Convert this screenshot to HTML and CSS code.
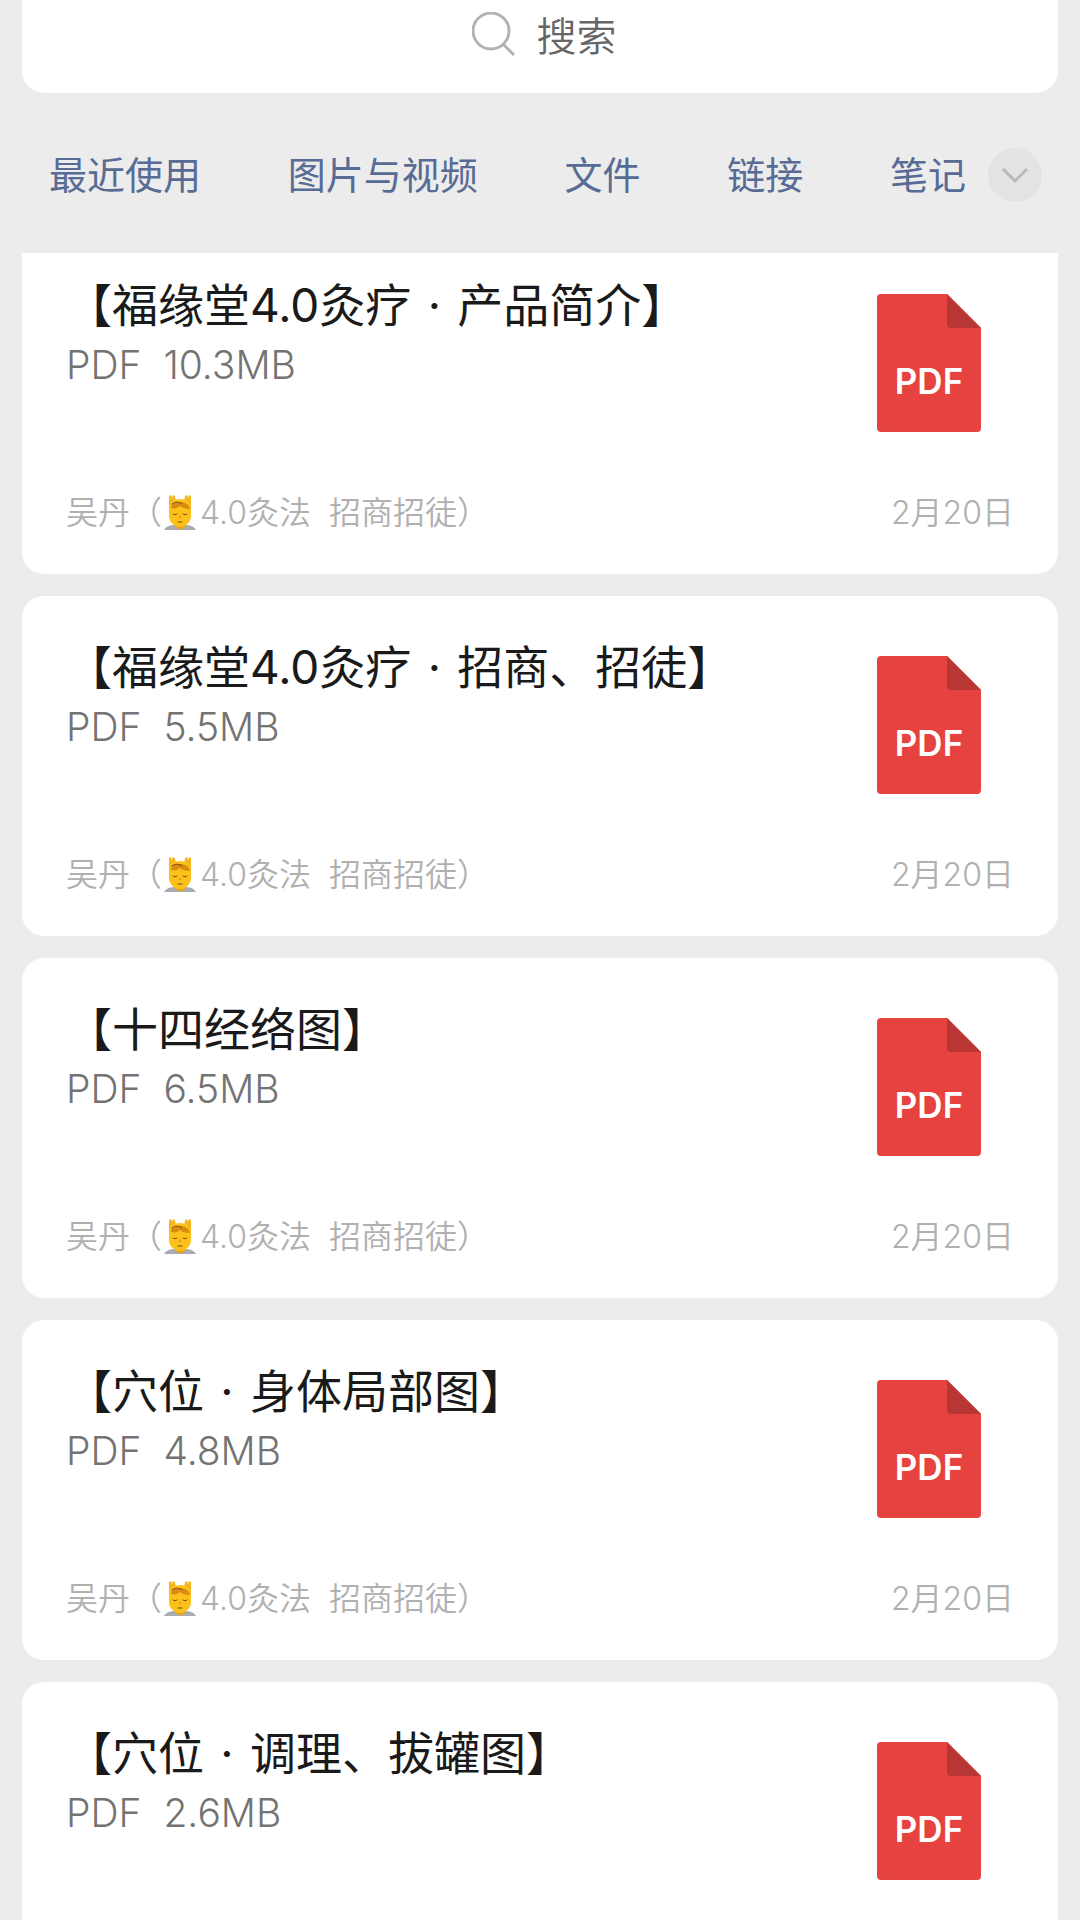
FILE: index.html
```
<!DOCTYPE html>
<html lang="zh-CN">
<head>
<meta charset="utf-8">
<meta name="viewport" content="width=device-width, initial-scale=1">
<title>搜索</title>
<link rel="stylesheet" href="styles.css">
</head>
<body>
<svg class="sprite" aria-hidden="true">
  <symbol id="pdf" viewBox="0 0 104 138">
    <path fill="#e64340" d="M4 0H70L104 34V134a4 4 0 0 1-4 4H4a4 4 0 0 1-4-4V4a4 4 0 0 1 4-4z"/>
    <path fill="#b83633" d="M70 0L104 34H74a4 4 0 0 1-4-4z"/>
  </symbol>
  <symbol id="massage" viewBox="0 0 32 36">
    <path fill="#a9abb3" d="M0 35C2 31 7 30 11 30h10c4 0 9 1 11 5z"/>
    <path fill="#e8a417" d="M12 27h9v5c-2 3-7 3-9 0z"/>
    <path fill="#f4b51e" d="M5 1l2-1 1 3 1-3 2 1 1 7-3 6-4 2zM27 1l-2-1-1 3-1-3-2 1-1 7 3 6 4 2z"/>
    <path fill="#fcc21b" d="M5 15C5 7 10 4 16 4s11 3 11 11v6c0 6-5 11-11 11S5 27 5 21z"/>
    <path fill="#d98b12" d="M7 13C7 9 11 7 16 7s9 2 10 7c-5 0-8-1-10-3-2 2-5 3-9 2z"/>
    <path fill="none" stroke="#744b12" stroke-width="1" stroke-linecap="round" d="M8 9c3-3 8-2 10 0M9 19c1 1 3 1 4 0M19 19c1 1 3 1 4 0M14 27h4"/>
    <path fill="none" stroke="#dc7d20" stroke-width="1" stroke-linecap="round" d="M16 21v2"/>
  </symbol>
</svg>

<header class="top">
  <label class="search">
    <svg class="search-icon" viewBox="0 0 44 44" aria-hidden="true"><circle cx="19" cy="19" r="18"/><path d="M31 32l11 11"/></svg>
    <input class="search-input" type="text" placeholder="搜索" aria-label="搜索">
  </label>
  <nav class="filters">
    <div class="tabs">
      <a class="tab" href="#">最近使用</a>
      <a class="tab" href="#">图片与视频</a>
      <a class="tab" href="#">文件</a>
      <a class="tab" href="#">链接</a>
      <a class="tab" href="#">笔记</a>
    </div>
    <button class="more" type="button" aria-label="更多">
      <svg class="chevron" viewBox="0 0 28 16" aria-hidden="true"><path d="M2 2l12 12L26 2"/></svg>
    </button>
  </nav>
</header>

<main class="list">
  <article class="card card-cut">
    <div class="body">
      <div class="text">
        <h2 class="title">【福缘堂4.0灸疗<span class="dot">·</span>产品简介】</h2>
        <p class="meta">PDF&nbsp; 10.3MB</p>
      </div>
      <div class="file"><svg class="sheet" aria-hidden="true"><use href="#pdf"/></svg><span class="kind">PDF</span></div>
    </div>
    <footer class="foot"><span class="source">吴丹（<svg class="emoji" aria-hidden="true"><use href="#massage"/></svg>4.0灸法&nbsp; 招商招徒）</span><time>2月20日</time></footer>
  </article>
  <article class="card">
    <div class="body">
      <div class="text">
        <h2 class="title">【福缘堂4.0灸疗<span class="dot">·</span>招商、招徒】</h2>
        <p class="meta">PDF&nbsp; 5.5MB</p>
      </div>
      <div class="file"><svg class="sheet" aria-hidden="true"><use href="#pdf"/></svg><span class="kind">PDF</span></div>
    </div>
    <footer class="foot"><span class="source">吴丹（<svg class="emoji" aria-hidden="true"><use href="#massage"/></svg>4.0灸法&nbsp; 招商招徒）</span><time>2月20日</time></footer>
  </article>
  <article class="card">
    <div class="body">
      <div class="text">
        <h2 class="title">【十四经络图】</h2>
        <p class="meta">PDF&nbsp; 6.5MB</p>
      </div>
      <div class="file"><svg class="sheet" aria-hidden="true"><use href="#pdf"/></svg><span class="kind">PDF</span></div>
    </div>
    <footer class="foot"><span class="source">吴丹（<svg class="emoji" aria-hidden="true"><use href="#massage"/></svg>4.0灸法&nbsp; 招商招徒）</span><time>2月20日</time></footer>
  </article>
  <article class="card">
    <div class="body">
      <div class="text">
        <h2 class="title">【穴位<span class="dot">·</span>身体局部图】</h2>
        <p class="meta">PDF&nbsp; 4.8MB</p>
      </div>
      <div class="file"><svg class="sheet" aria-hidden="true"><use href="#pdf"/></svg><span class="kind">PDF</span></div>
    </div>
    <footer class="foot"><span class="source">吴丹（<svg class="emoji" aria-hidden="true"><use href="#massage"/></svg>4.0灸法&nbsp; 招商招徒）</span><time>2月20日</time></footer>
  </article>
  <article class="card card-last">
    <div class="body">
      <div class="text">
        <h2 class="title">【穴位<span class="dot">·</span>调理、拔罐图】</h2>
        <p class="meta">PDF&nbsp; 2.6MB</p>
      </div>
      <div class="file"><svg class="sheet" aria-hidden="true"><use href="#pdf"/></svg><span class="kind">PDF</span></div>
    </div>
  </article>
</main>
</body>
</html>
```

FILE: styles.css
```
* { box-sizing: border-box; }

body {
  display: flex;
  flex-direction: column;
  margin: 0;
  min-height: 100vh;
  padding: 0 22px;
  background: #ececec;
  font-family: Inter, "Noto Sans CJK SC", sans-serif;
}

.sprite { position: absolute; width: 0; height: 0; }

.search {
  display: flex;
  align-items: center;
  justify-content: center;
  gap: 21px;
  padding: 4px 0 29px 8px;
  background: #fff;
  border-radius: 0 0 22px 22px;
}

.search-icon {
  width: 44px;
  height: 44px;
  fill: none;
  stroke: #b2b2b2;
  stroke-width: 3;
}

.search-input {
  width: 80px;
  height: 60px;
  padding: 4px 0 0;
  border: 0;
  outline: 0;
  background: none;
  font: 350 40px/56px Inter, "Noto Sans CJK SC", sans-serif;
  color: #1a1a1a;
}

.search-input::placeholder { color: #666; opacity: 1; }

.filters {
  display: flex;
  align-items: center;
  gap: 22px;
  height: 160px;
  padding: 4px 16px 0 27px;
}

.tabs {
  flex: 1;
  display: flex;
  justify-content: space-between;
}

.tab {
  color: #576b95;
  font-size: 38px;
  line-height: 56px;
  text-decoration: none;
  white-space: nowrap;
}

.more {
  display: grid;
  place-items: center;
  width: 54px;
  height: 54px;
  padding: 0;
  border: 0;
  border-radius: 50%;
  background: #e3e3e3;
}

.chevron {
  width: 28px;
  height: 16px;
  fill: none;
  stroke: #b9b9b9;
  stroke-width: 3;
}

.list {
  flex: 1;
  display: flex;
  flex-direction: column;
  gap: 22px;
}

.card {
  padding: 41px 44px;
  border-radius: 22px;
  background: #fff;
}

.card-cut {
  padding-top: 22px;
  border-radius: 0 0 22px 22px;
}

.card-last {
  flex: 1;
  padding-bottom: 0;
  border-radius: 22px 22px 0 0;
}

.body {
  display: flex;
  justify-content: space-between;
  padding-right: 33px;
}

.title {
  margin: 0;
  color: #1a1a1a;
  font-size: 46px;
  font-weight: 400;
  line-height: 60px;
}

.dot {
  display: inline-block;
  width: 46px;
  text-align: center;
}

.meta {
  margin: 0;
  color: #737373;
  font-size: 39px;
  font-weight: 350;
  line-height: 60px;
}

.file {
  display: grid;
  margin-top: 19px;
}

.sheet, .kind { grid-area: 1 / 1; }

.sheet {
  display: block;
  width: 104px;
  height: 138px;
}

.kind {
  place-self: center;
  padding-top: 36px;
  color: #fff;
  font-size: 35px;
  font-weight: 600;
  line-height: 40px;
}

.foot {
  display: flex;
  justify-content: space-between;
  margin-top: 61px;
  color: #b0b0b0;
  font-size: 32px;
  font-weight: 350;
  line-height: 40px;
}

.source {
  display: flex;
  align-items: center;
  white-space: nowrap;
}

.emoji {
  width: 32px;
  height: 36px;
  margin: 0 4px 0 2px;
}
```
